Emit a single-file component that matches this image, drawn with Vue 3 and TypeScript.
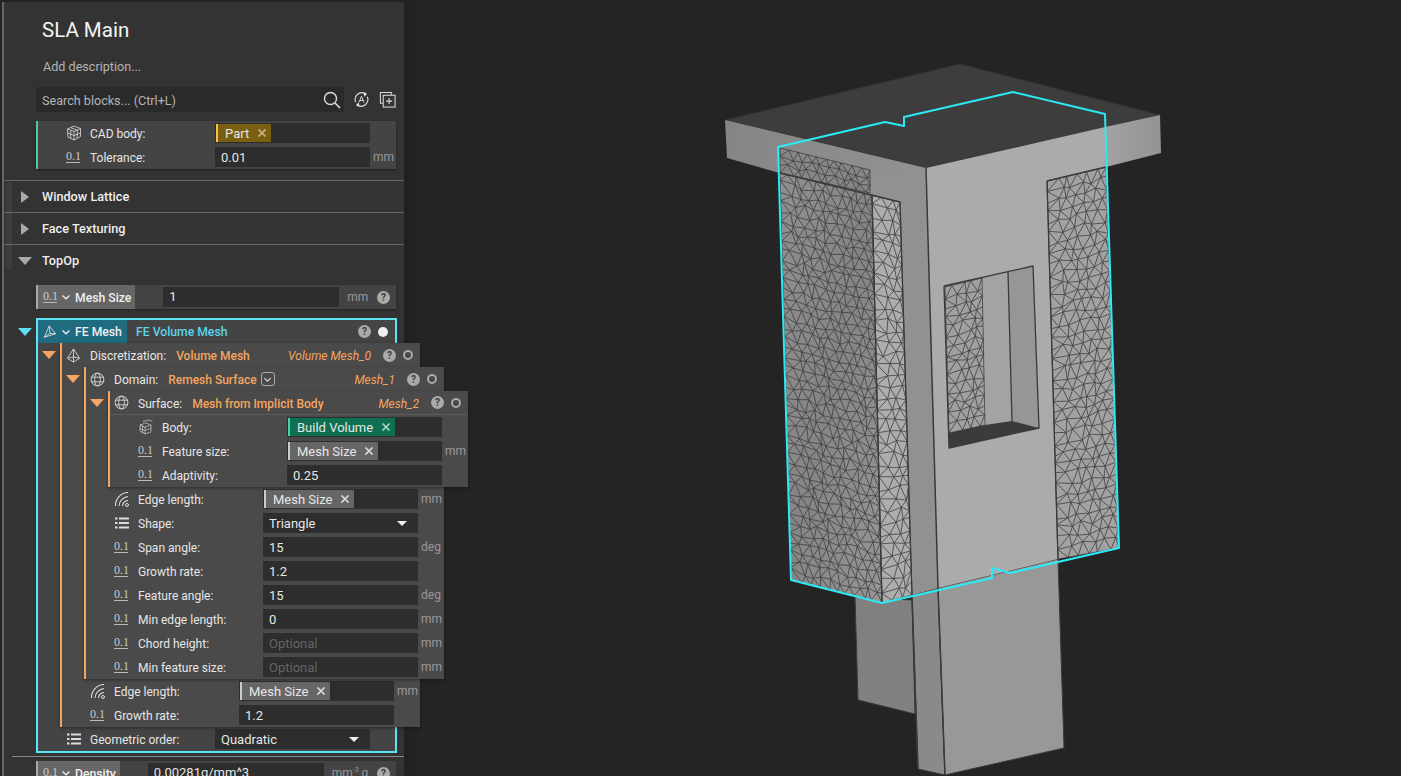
<template>
  <div class="app">
    <svg class="defs" width="0" height="0">
      <symbol id="i-search" viewBox="0 0 18 18"><circle cx="7.5" cy="7.5" r="6" fill="none" stroke="currentColor" stroke-width="1.4" /><path d="M12 12l5 5" stroke="currentColor" stroke-width="1.6" /></symbol>
      <symbol id="i-sync" viewBox="0 0 18 18"><path d="M3 12a7 7 0 0 1 10-9M15 6a7 7 0 0 1-10 9" fill="none" stroke="currentColor" stroke-width="1.2" /><path d="M11 1l4 2-3 3zM7 17l-4-2 3-3z" fill="currentColor" /><path d="M6.3 12L9 5.5l2.7 6.5M7.3 10h3.4" fill="none" stroke="currentColor" stroke-width="1" /></symbol>
      <symbol id="i-add" viewBox="0 0 18 18"><path d="M4 13H1.5V1.5H13V4" fill="none" stroke="currentColor" stroke-width="1.1" /><rect x="4.5" y="4.5" width="12.5" height="12.5" fill="none" stroke="currentColor" stroke-width="1.1" /><path d="M10.7 7.5v6.5M7.5 10.7H14" stroke="currentColor" stroke-width="1.2" /></symbol>
      <symbol id="i-cube" viewBox="0 0 16 16"><path d="M1.500 4L8 1l6.500 2.500v8L8 15l-6-3zM1.500 4L8 6.500 14.500 3.500M8 6.500V15M1.700 8l6.300 2.500 6.500-2.500M4.700 2.700l6.500 2.500M4.800 5.300v8M11.300 5v8" fill="none" stroke="currentColor" stroke-width=".8" /></symbol>
      <symbol id="i-body" viewBox="0 0 16 16"><path d="M2 6l6-2 5 2v7l-6 2-5-3zM2 6l5 2 6-2M7 8v7M4.500 7v7M2 9.500l5 2 6-2M5 2.500l6-1.500 3.500 1.500" fill="none" stroke="currentColor" stroke-width=".8" stroke-dasharray="2 .6" /></symbol>
      <symbol id="i-pyramid" viewBox="0 0 16 16"><path d="M8 1L1.500 11 8 15l6.500-4zM8 1v14M1.500 11l6.500-1.500 6.500 1.500" fill="none" stroke="currentColor" stroke-width=".9" /></symbol>
      <symbol id="i-tetra" viewBox="0 0 16 16"><path d="M7 1L1.500 14 14.500 10zM7 1l1 8.500-6.500 4.500M8 9.500l6.500.5" fill="none" stroke="currentColor" stroke-width="1" /></symbol>
      <symbol id="i-globe" viewBox="0 0 16 16"><circle cx="8" cy="8" r="6.800" fill="none" stroke="currentColor" stroke-width="1" /><ellipse cx="8" cy="8" rx="3" ry="6.800" fill="none" stroke="currentColor" stroke-width=".9" /><path d="M1.800 5.500h12.400M1.800 10.500h12.400" stroke="currentColor" stroke-width=".9" /></symbol>
      <symbol id="i-waves" viewBox="0 0 16 16"><path d="M1.500 15A13 13 0 0 1 14 1.500M5 15a10 10 0 0 1 9-9.500M8.500 15a6 6 0 0 1 5.500-5.500" fill="none" stroke="currentColor" stroke-width="1.100" /><circle cx="13" cy="14" r="1.500" fill="none" stroke="currentColor" stroke-width="1" /></symbol>
      <symbol id="i-list" viewBox="0 0 16 16"><path d="M1 3.500h2.500M1 8h2.500M1 12.500h2.500M5 3.500h10M5 8h10M5 12.500h10" stroke="currentColor" stroke-width="2" /></symbol>
      <symbol id="i-x" viewBox="0 0 10 10"><path d="M1.500 1.500l7 7M8.500 1.500l-7 7" stroke="currentColor" stroke-width="1.700" /></symbol>
      <symbol id="i-chev" viewBox="0 0 10 10"><path d="M1.500 3.500L5 6.800l3.500-3.300" fill="none" stroke="currentColor" stroke-width="1.300" /></symbol>
    </svg>

    <aside class="panel">
      <div class="scroll-thumb"></div>
      <div class="head">
        <h1 class="title">SLA Main</h1>
        <p class="desc">Add description...</p>
        <div class="search-row">
          <div class="search">
            <span class="search-text">Search blocks... (Ctrl+L)</span>
            <Ico name="search" class="search-ico" />
          </div>
          <Ico name="sync" class="tool-ico" />
          <Ico name="add" class="tool-ico" />
        </div>
        <div class="card">
          <FieldRow v-for="r in cadRows" :key="r.label" :row="r" />
        </div>
      </div>

      <div class="section"><i class="tri-right"></i>Window Lattice</div>
      <div class="section"><i class="tri-right"></i>Face Texturing</div>
      <div class="section section-open"><i class="tri-down"></i>TopOp</div>

      <div class="var-row">
        <div class="var-tag"><NumIco /><Ico name="chev" class="chev" /><span class="nudge">Mesh Size</span></div>
        <div class="var-input">1</div>
        <span class="unit">mm</span>
        <span class="help">?</span>
      </div>

      <div class="fe-box">
        <i class="tri-down tri-cyan"></i>
        <div class="fe-head">
          <div class="fe-tag"><Ico name="tetra" class="ico-tetra" /><Ico name="chev" class="chev" /><span>FE Mesh</span></div>
          <span class="fe-name">FE Volume Mesh</span>
          <span class="help">?</span>
          <span class="dot"></span>
        </div>

        <div class="block">
          <i class="tri-down tri-orange"></i>
          <div class="block-head">
            <Ico name="pyramid" class="block-ico" />
            <span class="block-label nudge">Discretization:</span>
            <span class="block-value nudge">Volume Mesh</span>
            <span class="block-name nudge">Volume Mesh_0</span>
            <span class="help">?</span>
            <span class="ring"></span>
          </div>

          <div class="block">
            <i class="tri-down tri-orange"></i>
            <div class="block-head">
              <Ico name="globe" class="block-ico" />
              <span class="block-label nudge">Domain:</span>
              <span class="block-value nudge">Remesh Surface</span>
              <span class="pick"><Ico name="chev" class="pick-ico" /></span>
              <span class="block-name nudge">Mesh_1</span>
              <span class="help">?</span>
              <span class="ring"></span>
            </div>

            <div class="block">
              <i class="tri-down tri-orange"></i>
              <div class="block-head block-head-line">
                <Ico name="globe" class="block-ico" />
                <span class="block-label nudge">Surface:</span>
                <span class="block-value nudge">Mesh from Implicit Body</span>
                <span class="block-name nudge">Mesh_2</span>
                <span class="help">?</span>
                <span class="ring"></span>
              </div>
              <FieldRow v-for="r in surfaceRows" :key="r.label" :row="r" />
            </div>

            <FieldRow v-for="r in domainRows" :key="r.label" :row="r" />
          </div>

          <FieldRow v-for="r in discRows" :key="r.label" :row="r" />
        </div>

        <FieldRow class="geo-row" :row="geoRow" />
      </div>

      <div class="var-row density">
        <div class="var-tag"><NumIco /><Ico name="chev" class="chev" /><span class="nudge">Density</span></div>
        <div class="var-input">0.00281g/mm^3</div>
        <span class="unit">mm<sup>-3</sup> g</span>
        <span class="help">?</span>
      </div>
    </aside>

    <main class="viewport">
      <svg class="model" viewBox="404 0 997 776" width="997" height="776">
        <defs>
          <linearGradient id="plateL" x1="0" y1="0" x2="1" y2="0">
            <stop offset="0" stop-color="#858585" />
            <stop offset="1" stop-color="#929292" />
          </linearGradient>
          <linearGradient id="plateR" x1="0" y1="0" x2="1" y2="0">
            <stop offset="0" stop-color="#a2a2a2" />
            <stop offset="1" stop-color="#949494" />
          </linearGradient>
          <linearGradient id="faceL" x1="0" y1="0" x2="1" y2="1">
            <stop offset="0" stop-color="#8f8f8f" />
            <stop offset=".5" stop-color="#858585" />
            <stop offset="1" stop-color="#969696" />
          </linearGradient>
        </defs>
        <g stroke="#3a3a3a" stroke-width="1" stroke-linejoin="round">
          <!-- rear leg -->
          <polygon points="855,597 912,600 915,714 858,700" fill="#808080" />
          <!-- lower column -->
          <polygon points="912,595 938,588 945,775 918,769" fill="#8a8a8a" />
          <polygon points="938,588 1058,559 1064,748 945,775" fill="#989898" />
          <!-- top plate -->
          <polygon points="725,120 960,64 1160,115 926,168" fill="#3d3d3d" stroke="#333" />
          <polygon points="725,120 926,168 926,230 790,176 727,158" fill="url(#plateL)" stroke="none" />
          <polygon points="1105,127 1160,115 1161,153 1106,167" fill="url(#plateR)" stroke="none" />
          <!-- side and front of the column -->
          <polygon points="870,170 926,168 938,588 912,595 900,202 870,193" fill="#919191" stroke="none" />
          <polygon points="926,168 1105,127 1106,167 1047,181 1058,559 938,588" fill="#ababab" stroke="none" />
          <path d="M926,168L938,588M912,595L918,769M938,588L945,775" fill="none" stroke-width="1.5" />
          <!-- meshed faces -->
          <polygon points="780,148 870,170 870,193 780,173" fill="#868686" stroke="none" />
          <polygon points="780,173 872,195 882,603 791,580" fill="url(#faceL)" stroke="none" />
          <polygon points="872,195 900,202 912,595 882,603" fill="#adadad" stroke="none" />
          <polygon points="1047,181 1106,167 1119,548 1058,559" fill="#a2a2a2" stroke="none" />
          <!-- window -->
          <polygon points="944,286 982,278 985,425 949,433" fill="#a0a0a0" stroke="none" />
          <polygon points="982,278 1008,272 1012,421 985,425" fill="#a3a3a3" stroke="none" />
          <polygon points="1008,272 1033,266 1039,428 1012,421" fill="#969696" stroke="none" />
          <polygon points="949,433 985,425 1012,421 1039,428 949,448" fill="#3b3b3b" stroke="none" />
          <path :d="meshLines" fill="none" stroke="#3f3f3f" stroke-width=".8" />
          <path d="M780,173L900,202L912,595M1047,181L1106,167M1047,181L1058,559M944,286L1033,266L1039,428L949,448L944,286M1008,272L1012,421M872,195L882,603" fill="none" stroke-width="1.300" />
        </g>
        <polygon class="selection" points="778,147 885,122 904,126 904,117 1013,92 1105,114 1119,548 1010,573 992,568 992,578 882,603 791,580" />
      </svg>
    </main>
  </div>
</template>

<script setup lang="ts">
import { h } from 'vue';

type IconName = 'num' | 'cube' | 'body' | 'waves' | 'list';

interface Row {
  icon: IconName;
  label: string;
  value?: string;
  tag?: string;
  tagKind?: 'part' | 'volume' | 'var';
  placeholder?: string;
  select?: boolean;
  unit?: string;
}

type Quad = [number, number][];

// small icon helpers, shared by the template and the field rows
const Ico = (props: { name: string }) =>
  h('svg', { class: 'ico' }, [h('use', { href: '#i-' + props.name })]);
Ico.props = ['name'];

const NumIco = () => h('span', { class: 'num-ico' }, '0.1');

const fieldIcon = (name: IconName) => (name === 'num' ? h(NumIco) : h(Ico, { name, class: 'field-ico' }));

const fieldControl = (row: Row) => {
  const kids = [];
  if (row.tag) {
    kids.push(
      h('span', { class: ['field-tag', 'tag-' + row.tagKind] }, [
        h('span', row.tag),
        h(Ico, { name: 'x', class: 'tag-x' }),
      ]),
    );
  } else if (row.placeholder) {
    kids.push(h('span', { class: 'field-ph' }, row.placeholder));
  } else {
    kids.push(h('span', row.value));
  }
  if (row.select) kids.push(h('i', { class: 'field-caret' }));
  return h('div', { class: ['field-input', row.tag ? 'has-tag' : ''] }, kids);
};

const FieldRow = (props: { row: Row }) =>
  h('div', { class: 'field' }, [
    h('span', { class: 'field-icon' }, [fieldIcon(props.row.icon)]),
    h('span', { class: 'field-label' }, props.row.label),
    fieldControl(props.row),
    h('span', { class: 'field-unit' }, props.row.unit ?? ''),
  ]);
FieldRow.props = ['row'];

const cadRows: Row[] = [
  { icon: 'cube', label: 'CAD body:', tag: 'Part', tagKind: 'part' },
  { icon: 'num', label: 'Tolerance:', value: '0.01', unit: 'mm' },
];

const surfaceRows: Row[] = [
  { icon: 'body', label: 'Body:', tag: 'Build Volume', tagKind: 'volume' },
  { icon: 'num', label: 'Feature size:', tag: 'Mesh Size', tagKind: 'var', unit: 'mm' },
  { icon: 'num', label: 'Adaptivity:', value: '0.25' },
];

const domainRows: Row[] = [
  { icon: 'waves', label: 'Edge length:', tag: 'Mesh Size', tagKind: 'var', unit: 'mm' },
  { icon: 'list', label: 'Shape:', value: 'Triangle', select: true },
  { icon: 'num', label: 'Span angle:', value: '15', unit: 'deg' },
  { icon: 'num', label: 'Growth rate:', value: '1.2' },
  { icon: 'num', label: 'Feature angle:', value: '15', unit: 'deg' },
  { icon: 'num', label: 'Min edge length:', value: '0', unit: 'mm' },
  { icon: 'num', label: 'Chord height:', placeholder: 'Optional', unit: 'mm' },
  { icon: 'num', label: 'Min feature size:', placeholder: 'Optional', unit: 'mm' },
];

const discRows: Row[] = [
  { icon: 'waves', label: 'Edge length:', tag: 'Mesh Size', tagKind: 'var', unit: 'mm' },
  { icon: 'num', label: 'Growth rate:', value: '1.2' },
];

const geoRow: Row = { icon: 'list', label: 'Geometric order:', value: 'Quadratic', select: true };

// seeded random so the mesh is the same on every load
const rng = (seed: number) => () => {
  seed = (seed + 0x6d2b79f5) | 0;
  let t = Math.imul(seed ^ (seed >>> 15), 1 | seed);
  t = (t + Math.imul(t ^ (t >>> 7), 61 | t)) ^ t;
  return ((t ^ (t >>> 14)) >>> 0) / 4294967296;
};

// bilinear map of a jittered triangle grid onto a quad
const meshPath = (q: Quad, cols: number, rows: number, seed: number): string => {
  const rand = rng(seed);
  const nodes: string[][] = [];
  for (let j = 0; j <= rows; j++) {
    const line: string[] = [];
    for (let i = 0; i <= cols; i++) {
      let u = i / cols;
      let v = j / rows;
      if (i > 0 && i < cols) u += ((j % 2 ? 0.5 : 0) + (rand() - 0.5) * 0.55) / cols;
      if (j > 0 && j < rows) v += ((rand() - 0.5) * 0.55) / rows;
      u = Math.min(u, 1);
      const x = (1 - v) * ((1 - u) * q[0][0] + u * q[1][0]) + v * ((1 - u) * q[3][0] + u * q[2][0]);
      const y = (1 - v) * ((1 - u) * q[0][1] + u * q[1][1]) + v * ((1 - u) * q[3][1] + u * q[2][1]);
      line.push(x.toFixed(1) + ' ' + y.toFixed(1));
    }
    nodes.push(line);
  }
  let d = '';
  for (let j = 0; j <= rows; j++) {
    for (let i = 0; i <= cols; i++) {
      if (i < cols) d += `M${nodes[j][i]}L${nodes[j][i + 1]}`;
      if (j < rows) {
        d += `M${nodes[j][i]}L${nodes[j + 1][i]}`;
        if (j % 2 === 0 && i > 0) d += `M${nodes[j][i]}L${nodes[j + 1][i - 1]}`;
        if (j % 2 === 1 && i < cols) d += `M${nodes[j][i]}L${nodes[j + 1][i + 1]}`;
      }
    }
  }
  return d;
};

const meshLines = [
  meshPath([[780, 148], [870, 170], [870, 193], [780, 173]], 10, 3, 11),
  meshPath([[780, 173], [872, 195], [882, 603], [791, 580]], 10, 42, 23),
  meshPath([[872, 195], [900, 202], [912, 595], [882, 603]], 3, 36, 37),
  meshPath([[1047, 181], [1106, 167], [1119, 548], [1058, 559]], 6, 36, 41),
  meshPath([[945, 287], [982, 278], [985, 425], [949, 433]], 4, 15, 53),
].join('');
</script>

<style scoped>
.app {
  display: flex;
  width: 1401px;
  height: 776px;
  overflow: hidden;
  box-sizing: border-box;
  padding: 2px 0 0 2px;
  background: #242424;
  font-family: Roboto, "Liberation Sans", sans-serif;
  color: #e6e6e6;
}

.defs {
  flex: none;
}

.panel {
  position: relative;
  z-index: 1;
  flex: none;
  width: 402px;
  box-sizing: border-box;
  border-left: 2px solid #666;
  background: #333;
  box-shadow: 4px 0 10px rgba(0, 0, 0, 0.15);
}

.scroll-thumb {
  position: absolute;
  left: 2px;
  top: 180px;
  width: 6px;
  height: 88px;
  border-radius: 3px;
  background: rgba(255, 255, 255, 0.05);
}

.head {
  padding: 16px 8px 11px 32px;
}

.title {
  margin: 0 0 0 6px;
  font-size: 20.5px;
  font-weight: 400;
  line-height: 24px;
  color: #f4f4f4;
}

.desc {
  margin: 17px 0 12px 7px;
  font-size: 12.6px;
  line-height: 16px;
  color: #b4b4b4;
}

.search-row {
  display: flex;
  align-items: center;
  height: 25px;
  margin-bottom: 9px;
}

.search {
  display: flex;
  align-items: center;
  justify-content: space-between;
  width: 308px;
  height: 25px;
  box-sizing: border-box;
  padding: 0 3px 0 6px;
  background: #2a2a2a;
  font-size: 12.6px;
  color: #b4b4b4;
}

.search-text,
.nudge {
  margin-top: 2px;
}

.search-ico {
  width: 18px;
  height: 18px;
  color: #ddd;
}

.tool-ico {
  width: 17px;
  height: 17px;
  margin-left: 9px;
  color: #ddd;
}

.card {
  width: 360px;
  box-sizing: border-box;
  border-left: 2px solid #52c9a0;
  background: #444;
  box-shadow: 0 1px 2px rgba(0, 0, 0, 0.4);
}

.section {
  display: flex;
  align-items: center;
  height: 32px;
  box-sizing: border-box;
  border-top: 1px solid #666;
  padding-left: 17px;
  font-size: 12.7px;
  font-weight: 500;
  color: #eee;
}

.section i {
  margin-right: 13px;
}

.section-open i {
  margin-left: -3px;
  margin-right: 10px;
}

.tri-right {
  width: 0;
  height: 0;
  border-left: 8px solid #aaa;
  border-top: 6.5px solid transparent;
  border-bottom: 6.5px solid transparent;
}

.tri-down {
  width: 0;
  height: 0;
  border-top: 8px solid #aaa;
  border-left: 7px solid transparent;
  border-right: 7px solid transparent;
}

.tri-cyan {
  position: absolute;
  left: -20px;
  top: 8px;
  border-top-color: #5cdcf5;
}

.tri-orange {
  position: absolute;
  left: -20px;
  top: 8px;
  border-top-color: #f5a560;
}

.var-row {
  display: flex;
  align-items: center;
  width: 360px;
  height: 24px;
  box-sizing: border-box;
  margin: 9px 0 0 32px;
  padding-right: 6px;
  background: #444;
  box-shadow: 0 1px 2px rgba(0, 0, 0, 0.3);
  font-size: 13px;
}

.var-tag {
  display: flex;
  align-items: center;
  height: 24px;
  box-sizing: border-box;
  border-left: 2px solid #aaa;
  padding: 0 4px 0 5px;
  background: #666;
  font-size: 12.2px;
  font-weight: 500;
  white-space: nowrap;
  color: #f0f0f0;
  flex: none;
}

.chev {
  width: 10px;
  height: 10px;
  margin: 0 4px 0 4px;
  color: #eee;
}

.var-input {
  width: 176px;
  height: 20px;
  margin-left: 28px;
  padding-left: 6px;
  box-sizing: border-box;
  background: #2d2d2d;
  line-height: 20px;
  flex: none;
}

.unit {
  flex: 1;
  margin-left: 8px;
  font-size: 12px;
  white-space: nowrap;
  color: #999;
}

.unit sup {
  font-size: 7px;
  line-height: 0;
}

.help {
  display: inline-block;
  width: 13px;
  height: 13px;
  border-radius: 50%;
  background: #aaa;
  font-size: 10px;
  font-weight: 700;
  line-height: 13px;
  text-align: center;
  color: #3a3a3a;
  flex: none;
}

.fe-box {
  position: relative;
  width: 361px;
  height: 435px;
  box-sizing: border-box;
  margin: 9px 0 0 32px;
  border: 2px solid #5ce4f2;
  background: #444;
}

.fe-head {
  display: flex;
  align-items: center;
  height: 23px;
  font-size: 12.2px;
  padding-right: 7px;
}

.fe-tag {
  display: flex;
  align-items: center;
  width: 89px;
  height: 23px;
  padding-left: 5px;
  box-sizing: border-box;
  background: #1f6b80;
  font-weight: 500;
  color: #f0f0f0;
  flex: none;
}

.ico-tetra {
  width: 14px;
  height: 14px;
  color: #ddd;
}

.fe-name {
  flex: 1;
  margin-left: 9px;
  font-weight: 500;
  color: #5cd5ee;
}

.dot {
  width: 10px;
  height: 10px;
  margin-left: 7px;
  border-radius: 50%;
  background: #eee;
  flex: none;
}

.block {
  position: relative;
  width: 360px;
  box-sizing: border-box;
  margin-left: 22px;
  border-left: 2px solid #f5a560;
  background: #4a4a4a;
  box-shadow: 0 1px 3px rgba(0, 0, 0, 0.4);
}

.block-head {
  display: flex;
  align-items: center;
  height: 24px;
  box-sizing: border-box;
  padding: 0 7px 0 4px;
  font-size: 12px;
}

.block-head-line {
  border-bottom: 1px solid #5c5c5c;
}

.block-ico {
  width: 15px;
  height: 15px;
  margin-right: 9px;
  color: #ddd;
}

.block-label {
  margin-right: 10px;
  color: #e6e6e6;
}

.block-value {
  font-weight: 500;
  color: #f5a560;
}

.block-name {
  flex: 1;
  margin-right: 12px;
  font-style: italic;
  text-align: right;
  color: #f5a560;
}

.pick {
  display: flex;
  align-items: center;
  justify-content: center;
  width: 14px;
  height: 14px;
  box-sizing: border-box;
  margin-left: 4px;
  border: 1px solid #aaa;
  border-radius: 3px;
}

.pick-ico {
  width: 9px;
  height: 9px;
  color: #ddd;
}

.ring {
  width: 6px;
  height: 6px;
  margin-left: 7px;
  border: 2px solid #aaa;
  border-radius: 50%;
  flex: none;
}

.geo-row {
  margin-bottom: -1px;
}

.density {
  position: relative;
  margin-top: 8px;
  box-shadow: none;
}

.density::before {
  content: "";
  position: absolute;
  left: -24px;
  right: -8px;
  top: -5px;
  height: 1px;
  background: #888;
}

.viewport {
  flex: 1;
  min-width: 0;
  margin-top: -2px;
}

.model {
  display: block;
}

.selection {
  fill: none;
  stroke: #2ceaf5;
  stroke-width: 2;
  stroke-linejoin: round;
}
</style>

<style>
html,
body {
  margin: 0;
  background: #242424;
}

.ico {
  display: block;
  flex: none;
}

.num-ico {
  display: block;
  width: 14px;
  border-bottom: 1px solid #bbb;
  font-family: "Liberation Serif", serif;
  font-size: 12px;
  line-height: 11px;
  text-align: center;
  color: #ccc;
  flex: none;
}

.field {
  display: grid;
  grid-template-columns: 28px 24px 125px 155px 1fr;
  align-items: center;
  height: 24px;
  font-size: 12px;
  color: #e6e6e6;
}

.field-icon {
  grid-column: 2;
  display: block;
}

.field-ico {
  width: 16px;
  height: 16px;
  color: #ddd;
}

.field-label {
  grid-column: 3;
  margin-top: 2px;
}

.field-input {
  display: flex;
  align-items: center;
  justify-content: space-between;
  height: 20px;
  box-sizing: border-box;
  padding: 0 6px;
  background: #2d2d2d;
  font-size: 13px;
}

.field-input.has-tag {
  padding: 0 0 0 1px;
  justify-content: flex-start;
}

.field-ph {
  color: #666;
}

.field-caret {
  width: 0;
  height: 0;
  margin-right: 5px;
  border-top: 5px solid #eee;
  border-left: 5px solid transparent;
  border-right: 5px solid transparent;
}

.field-tag {
  display: flex;
  align-items: center;
  height: 18px;
  box-sizing: border-box;
  padding: 0 4px 0 7px;
  border-left: 2px solid;
}

.field-tag .tag-x {
  width: 10px;
  height: 10px;
  margin-left: 8px;
}

.tag-part {
  background: #7a5f10;
  border-left-color: #f5c542;
}

.tag-part .tag-x {
  color: #c9b98a;
}

.tag-volume {
  background: #0f6f52;
  border-left-color: #45d6a5;
}

.tag-volume .tag-x {
  color: #a8d8c8;
}

.tag-var {
  background: #666;
  border-left-color: #ccc;
}

.tag-var .tag-x {
  color: #ddd;
}

.field-unit {
  margin-left: 3px;
  font-size: 12px;
  color: #999;
}
</style>
